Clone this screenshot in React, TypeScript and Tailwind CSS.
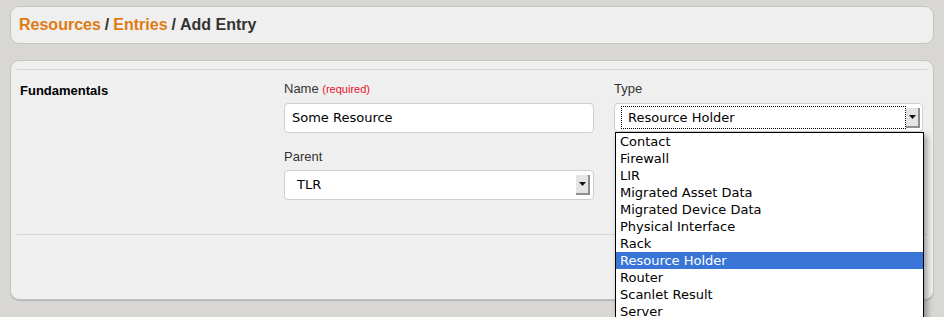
const tipos = [
  "Contact",
  "Firewall",
  "LIR",
  "Migrated Asset Data",
  "Migrated Device Data",
  "Physical Interface",
  "Rack",
  "Resource Holder",
  "Router",
  "Scanlet Result",
  "Server",
  "Switch",
];

function SetaSelect() {
  return (
    <div className="flex h-[20px] w-[14px] items-center justify-center border-r-2 border-b-2 border-[#8e8e8e] bg-[#e4e4e4]">
      <svg width="7" height="4" viewBox="0 0 7 4">
        <path d="M0 0h7L3.5 4z" fill="#111" />
      </svg>
    </div>
  );
}

function App() {
  const selecionado = "Resource Holder";

  return (
    <div className="relative h-[317px] overflow-hidden bg-[#d8d7d4] px-[10px] pt-[6px] font-['Liberation_Sans',Arial,sans-serif]">
      <div className="flex h-[38px] items-center rounded-[9px] border border-[#c4c4c4] bg-[#efefef] pl-[8px] text-[16px] font-bold text-[#333]">
        <span className="text-[#e07b12]">Resources</span>
        <span className="mx-[4px]">/</span>
        <span className="text-[#e07b12]">Entries</span>
        <span className="mx-[4px]">/</span>
        <span>Add Entry</span>
      </div>

      <div className="mt-[16px] h-[240px] rounded-[9px] border border-[#c4c4c4] bg-[#efefef] px-[6px] pt-[8px] shadow-[0_1px_0_#b5b5b5]">
        <div className="h-px bg-[#d4d4d4]" />
        <div className="flex pt-[11px]">
          <div className="w-[267px] pl-[3px] text-[13px] font-bold text-black">
            Fundamentals
          </div>
          <div className="flex w-[310px] flex-col">
            <div className="text-[13px] leading-[16px] text-[#333]">
              Name <span className="text-[11px] text-[#e8112d]">(required)</span>
            </div>
            <div className="mt-[6px] flex h-[30px] items-center rounded-[4px] border border-[#cfcfcf] bg-white pl-[7px] font-['DejaVu_Sans',sans-serif] text-[13px] text-black">
              Some Resource
            </div>
            <div className="mt-[16px] text-[13px] leading-[16px] text-[#333]">Parent</div>
            <div className="mt-[5px] flex h-[30px] items-center justify-between rounded-[4px] border border-[#cfcfcf] bg-white pr-[3px] pl-[12px] font-['DejaVu_Sans',sans-serif] text-[13px] text-black">
              <span>TLR</span>
              <SetaSelect />
            </div>
          </div>
          <div className="ml-[20px] flex w-[309px] flex-col">
            <div className="text-[13px] leading-[16px] text-[#333]">Type</div>
            <div className="mt-[6px] flex h-[29px] items-center rounded-[4px] border border-[#cfcfcf] bg-white pr-[2px] pl-[6px]">
              <div className="flex h-[23px] flex-1 items-center border border-dotted border-black pl-[6px] font-['DejaVu_Sans',sans-serif] text-[13px] text-black">
                {selecionado}
              </div>
              <SetaSelect />
            </div>
          </div>
        </div>
        <div className="mt-[34px] h-px bg-[#d4d4d4]" />
      </div>

      <div className="absolute top-[132px] left-[615px] w-[309px] border border-b-0 border-black bg-white shadow-[3px_3px_6px_rgba(0,0,0,0.35)]">
        {tipos.map((tipo) => (
          <div
            key={tipo}
            className={
              tipo === selecionado
                ? "h-[17px] bg-[#3875d7] pl-[4px] font-['DejaVu_Sans',sans-serif] text-[13px] leading-[17px] text-white"
                : "h-[17px] pl-[4px] font-['DejaVu_Sans',sans-serif] text-[13px] leading-[17px] text-black"
            }
          >
            {tipo}
          </div>
        ))}
      </div>
    </div>
  );
}

export default App;
